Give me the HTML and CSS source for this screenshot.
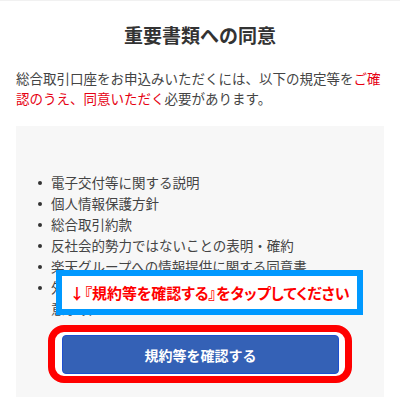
FILE: index.html
```html
<!DOCTYPE html>
<html lang="ja">
<head>
<meta charset="utf-8">
<link rel="stylesheet" href="styles.css">
</head>
<body>
<div class="page">
  <h1 class="title">重要書類への同意</h1>
  <p class="lead">総合取引口座をお申込みいただくには、以下の規定等を<span class="em">ご確認のうえ、同意いただく</span>必要があります。</p>
  <div class="panel">
    <ul class="docs">
      <li>電子交付等に関する説明</li>
      <li>個人情報保護方針</li>
      <li>総合取引約款</li>
      <li>反社会的勢力ではないことの表明・確約</li>
      <li>楽天グループへの情報提供に関する同意書</li>
      <li>外国証券取引口座約款及び外国株式取引に関する同意事項</li>
    </ul>
    <div class="ring">
      <button class="confirm" type="button">規約等を確認する</button>
    </div>
    <div class="callout">↓『規約等を確認する』をタップしてください</div>
  </div>
</div>
</body>
</html>
```
FILE: styles.css
```css
html, body {
  margin: 0;
  padding: 0;
  background: #fff;
}
body {
  font-family: "Noto Sans CJK JP", "Noto Sans", sans-serif;
  color: #444;
}
.page {
  width: 400px;
  height: 418px;
  border-top: 1px solid #f1f1f1;
  box-sizing: border-box;
  padding: 0 16px;
}
.title {
  margin: 0;
  padding-top: 20px;
  font-size: 19px;
  line-height: 28px;
  font-weight: 700;
  color: #333;
  text-align: center;
}
.lead {
  margin: 19px 0 0;
  font-size: 13.5px;
  line-height: 20px;
}
.em {
  color: #e60012;
}
.panel {
  position: relative;
  margin-top: 18px;
  background: #f7f7f7;
  padding: 46px 0 14px;
}
.docs {
  list-style: none;
  margin: 0;
  padding: 0 16px 0 22px;
  font-size: 13.5px;
  line-height: 21px;
}
.docs li {
  display: flex;
  align-items: flex-start;
}
.docs li::before {
  content: "";
  flex: none;
  width: 4px;
  height: 4px;
  border-radius: 50%;
  background: #333;
  margin: 9px 9px 0 0;
}
.ring {
  margin: 6px 32px 0;
  border: 7px solid #ff0000;
  border-radius: 16px;
  padding: 3px 6px 2px 7px;
  background: #fff;
}
.confirm {
  display: block;
  width: 100%;
  height: 39px;
  margin: 0;
  background: #3461b6;
  border: 1px solid #1d4fd0;
  border-radius: 4px;
  color: #fff;
  font-family: "Noto Sans CJK JP", sans-serif;
  font-size: 14px;
  font-weight: 700;
}
.callout {
  position: absolute;
  left: 40px;
  top: 144px;
  width: 307px;
  height: 45px;
  box-sizing: border-box;
  border: 6px solid #0099ff;
  background: #fff;
  color: #ff0000;
  font-size: 15px;
  font-weight: 700;
  line-height: 33px;
  text-align: center;
  font-feature-settings: "palt";
  white-space: nowrap;
}
```
